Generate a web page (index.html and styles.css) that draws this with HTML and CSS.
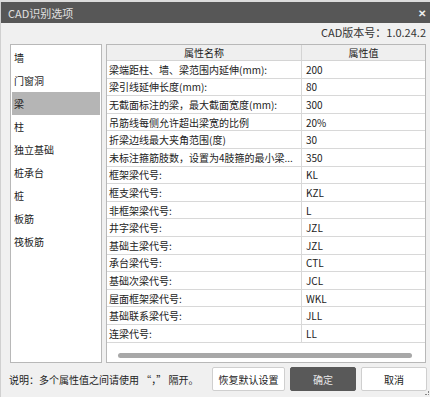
FILE: index.html
```html
<!DOCTYPE html>
<html lang="zh">
<head>
    <meta charset="UTF-8">
    <meta name="viewport" content="width=device-width, initial-scale=1.0">
    <title>CAD识别选项</title>
    <link rel="stylesheet" href="styles.css">
</head>
<body>
    <div class="backdrop"></div>
    <div class="window">
        <div class="titlebar">
            <span>CAD识别选项</span>
            <span class="close">✕</span>
        </div>

        <div class="version">CAD版本号：1.0.24.2</div>

        <div class="main">
            <div class="list">
                <div class="item">墙</div>
                <div class="item">门窗洞</div>
                <div class="item selected">梁</div>
                <div class="item">柱</div>
                <div class="item">独立基础</div>
                <div class="item">桩承台</div>
                <div class="item">桩</div>
                <div class="item">板筋</div>
                <div class="item">筏板筋</div>
            </div>

            <div class="grid-panel">
                <table class="props">
                    <thead>
                        <tr><th class="col-name">属性名称</th><th>属性值</th></tr>
                    </thead>
                    <tbody>
                        <tr><td>梁端距柱、墙、梁范围内延伸(mm):</td><td>200</td></tr>
                        <tr><td>梁引线延伸长度(mm):</td><td>80</td></tr>
                        <tr><td>无截面标注的梁，最大截面宽度(mm):</td><td>300</td></tr>
                        <tr><td>吊筋线每侧允许超出梁宽的比例</td><td>20%</td></tr>
                        <tr><td>折梁边线最大夹角范围(度)</td><td>30</td></tr>
                        <tr><td>未标注箍筋肢数，设置为4肢箍的最小梁...</td><td>350</td></tr>
                        <tr><td>框架梁代号:</td><td>KL</td></tr>
                        <tr><td>框支梁代号:</td><td>KZL</td></tr>
                        <tr><td>非框架梁代号:</td><td>L</td></tr>
                        <tr><td>井字梁代号:</td><td>JZL</td></tr>
                        <tr><td>基础主梁代号:</td><td>JZL</td></tr>
                        <tr><td>承台梁代号:</td><td>CTL</td></tr>
                        <tr><td>基础次梁代号:</td><td>JCL</td></tr>
                        <tr><td>屋面框架梁代号:</td><td>WKL</td></tr>
                        <tr><td>基础联系梁代号:</td><td>JLL</td></tr>
                        <tr><td>连梁代号:</td><td>LL</td></tr>
                    </tbody>
                </table>
                <div class="hscroll"><div class="thumb"></div></div>
            </div>
        </div>

        <div class="footer">
            <span class="note">说明：多个属性值之间请使用 “，” 隔开。</span>
            <div class="buttons">
                <button class="btn reset">恢复默认设置</button>
                <button class="btn ok">确定</button>
                <button class="btn cancel">取消</button>
            </div>
            <span class="grip"></span>
        </div>
    </div>
</body>
</html>
```

FILE: styles.css
```css
body {
    margin: 0;
    padding: 0;
    font-family: "Noto Sans CJK SC", "Noto Sans", sans-serif;
    font-size: 10px;
    color: #222;
    background-color: #d4d4d4;
}
.backdrop {
    height: 2px;
    background-color: #dcdcdc;
}
.window {
    height: 395px;
    display: flex;
    flex-direction: column;
    background-color: #f0f0f0;
    border-left: 1px solid #d0d0d0;
    box-sizing: border-box;
    position: relative;
}
.titlebar {
    height: 21px;
    background-color: #575757;
    color: #e0e0e0;
    font-size: 11px;
    display: flex;
    justify-content: space-between;
    align-items: center;
    padding: 0 4px 0 7px;
}
.close {
    font-size: 10px;
    color: #eee;
    font-weight: bold;
}
.version {
    height: 21px;
    line-height: 19px;
    text-align: right;
    padding-right: 4px;
    font-size: 11px;
    color: #333;
}
.main {
    display: flex;
    gap: 4px;
    height: 319px;
    padding: 0 4px 0 9px;
}
.list {
    width: 88px;
    background-color: #fff;
    border: 1px solid #b8b8b8;
    padding: 1px;
}
.item {
    height: 23px;
    line-height: 23px;
    padding-left: 2px;
}
.item.selected {
    background-color: #b5b5b5;
}
.grid-panel {
    flex: 1;
    background-color: #fff;
    border: 1px solid #b8b8b8;
    display: flex;
    flex-direction: column;
    justify-content: space-between;
}
.props {
    width: 100%;
    border-collapse: collapse;
    table-layout: fixed;
}
.props th {
    height: 15px;
    font-weight: normal;
    background-color: #efefef;
    border: 1px solid #d4d4d4;
    border-top: none;
    text-align: center;
    padding: 0;
}
.props th.col-name {
    width: 194px;
    border-left: none;
}
.props th:last-child, .props td:last-child {
    border-right: none;
}
.props td {
    height: 16.6px;
    border: 1px solid #d8d8d8;
    padding: 0 0 0 2px;
    white-space: nowrap;
    overflow: hidden;
}
.props td:first-child {
    border-left: none;
}
.props td:last-child {
    padding-left: 4px;
}
.hscroll {
    padding: 0 13px 4px 11px;
}
.thumb {
    height: 5px;
    border-radius: 3px;
    background-color: #a8a8a8;
}
.footer {
    flex: 1;
    display: flex;
    align-items: center;
    justify-content: space-between;
    padding: 0 3px 2px 8px;
}
.note {
    color: #222;
}
.buttons {
    display: flex;
    gap: 5px;
}
.btn {
    height: 24px;
    font-family: inherit;
    font-size: 10px;
    border: 1px solid #cfcfcf;
    border-radius: 2px;
    background-color: #fff;
    color: #222;
    padding: 0;
}
.btn.reset {
    width: 73px;
}
.btn.ok {
    width: 66px;
    background-color: #595959;
    border-color: #595959;
    color: #e8e8e8;
}
.btn.cancel {
    width: 66px;
}
.grip {
    position: absolute;
    right: 1px;
    bottom: 2px;
    width: 3px;
    height: 3px;
    border-right: 1px dotted #888;
    border-bottom: 1px dotted #888;
}
```
